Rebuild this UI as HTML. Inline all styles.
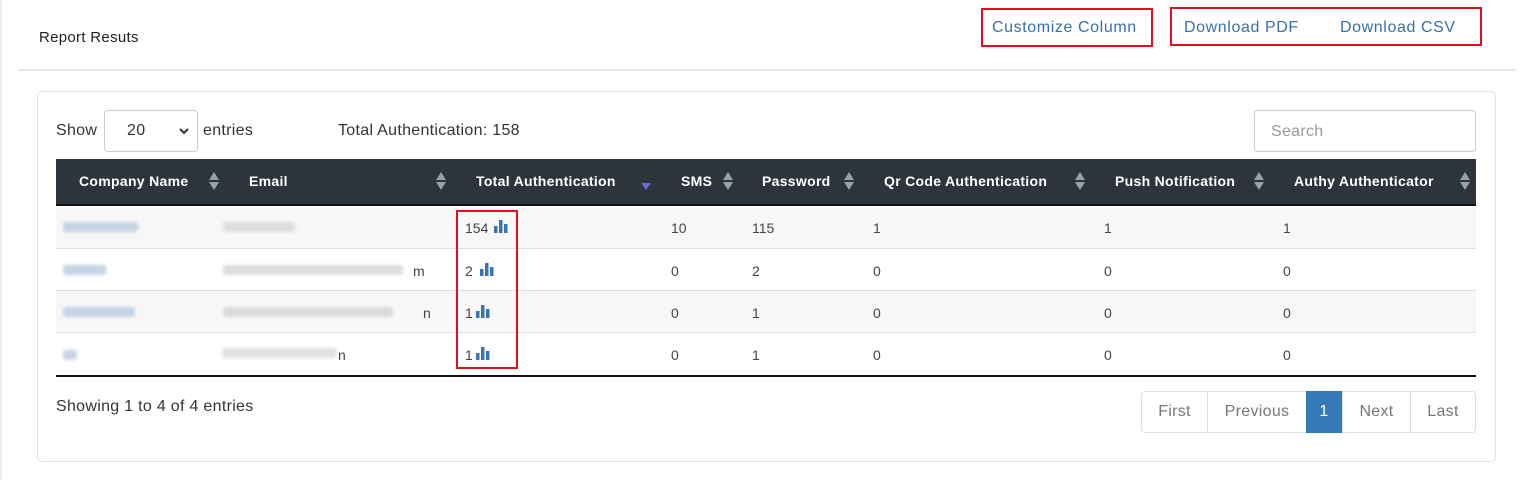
<!DOCTYPE html>
<html><head><meta charset="utf-8"><style>
*{margin:0;padding:0;box-sizing:border-box}
body{width:1536px;height:480px;background:#fff;font-family:"Liberation Sans",sans-serif;position:relative;overflow:hidden;color:#333}
.a{position:absolute;white-space:nowrap}
.lnk{color:#3a6fa8;font-size:16px;letter-spacing:0.6px}
.th{color:#fff;font-weight:bold;font-size:14px;top:173px;letter-spacing:0.3px}
.td{font-size:14px;color:#444}
.sort{position:absolute;width:10px;height:20px}
.blur{position:absolute;height:10px;border-radius:3px;filter:blur(1.5px)}
.pg{position:absolute;top:391px;height:42px;border:1px solid #ddd;font-size:16px;color:#777;display:flex;align-items:center;justify-content:center;letter-spacing:0.3px}
.t16{font-size:16px;letter-spacing:0.3px}
</style></head><body>
<div class="a" style="left:0;top:0;width:2px;height:480px;background:#eee"></div>
<div class="a" style="left:39px;top:29px;font-size:15px;color:#222;letter-spacing:0.3px">Report Resuts</div>
<div class="a" style="left:981px;top:8px;width:172px;height:39px;border:2px solid #e0101e"></div>
<div class="a lnk" style="left:992px;top:19px">Customize Column</div>
<div class="a" style="left:1170px;top:7px;width:312px;height:39px;border:2px solid #e0101e"></div>
<div class="a lnk" style="left:1184px;top:19px">Download PDF</div>
<div class="a lnk" style="left:1340px;top:19px">Download CSV</div>
<div class="a" style="left:18px;top:69px;width:1498px;height:2px;background:#e6e6e6"></div>

<div class="a" style="left:37px;top:91px;width:1459px;height:371px;border:1px solid #e2e2e2;border-radius:5px"></div>
<div class="a t16" style="left:56px;top:122px;color:#333">Show</div>
<div class="a" style="left:104px;top:110px;width:94px;height:42px;border:1px solid #ccc;border-radius:4px"></div>
<div class="a t16" style="left:127px;top:122px">20</div>
<svg class="a" style="left:178px;top:127px" width="12" height="8"><path d="M2 2l4 4 4-4" fill="none" stroke="#333" stroke-width="2"/></svg>
<div class="a t16" style="left:203px;top:122px">entries</div>
<div class="a t16" style="left:338px;top:122px">Total Authentication: 158</div>
<div class="a" style="left:1254px;top:110px;width:222px;height:42px;border:1px solid #ccc;border-radius:4px"></div>
<div class="a t16" style="left:1271px;top:123px;color:#999">Search</div>

<div class="a" style="left:56px;top:159px;width:1420px;height:47px;background:#2e343c;border-bottom:2px solid #111"></div>
<div class="a th" style="left:79px">Company Name</div>
<div class="a th" style="left:249px">Email</div>
<div class="a th" style="left:476px">Total Authentication</div>
<div class="a th" style="left:681px">SMS</div>
<div class="a th" style="left:762px">Password</div>
<div class="a th" style="left:884px">Qr Code Authentication</div>
<div class="a th" style="left:1115px">Push Notification</div>
<div class="a th" style="left:1294px">Authy Authenticator</div>
<svg class="sort" style="left:209px;top:171px"><path d="M5 1l5 8H0zM5 19l5-8H0z" fill="#9aa0a8"/></svg>
<svg class="sort" style="left:436px;top:171px"><path d="M5 1l5 8H0zM5 19l5-8H0z" fill="#9aa0a8"/></svg>
<svg class="sort" style="left:641px;top:171px"><path d="M5 19l5-7H0z" fill="#6a6ad8"/></svg>
<svg class="sort" style="left:723px;top:171px"><path d="M5 1l5 8H0zM5 19l5-8H0z" fill="#9aa0a8"/></svg>
<svg class="sort" style="left:844px;top:171px"><path d="M5 1l5 8H0zM5 19l5-8H0z" fill="#9aa0a8"/></svg>
<svg class="sort" style="left:1075px;top:171px"><path d="M5 1l5 8H0zM5 19l5-8H0z" fill="#9aa0a8"/></svg>
<svg class="sort" style="left:1254px;top:171px"><path d="M5 1l5 8H0zM5 19l5-8H0z" fill="#9aa0a8"/></svg>
<svg class="sort" style="left:1460px;top:171px"><path d="M5 1l5 8H0zM5 19l5-8H0z" fill="#9aa0a8"/></svg>

<div class="a" style="left:56px;top:207px;width:1420px;height:42px;background:#f7f7f7;border-bottom:1px solid #ddd"></div>
<div class="a" style="left:56px;top:249px;width:1420px;height:42px;border-bottom:1px solid #ddd"></div>
<div class="a" style="left:56px;top:291px;width:1420px;height:42px;background:#f7f7f7;border-bottom:1px solid #ddd"></div>
<div class="a" style="left:56px;top:375px;width:1420px;height:2px;background:#111"></div>

<div class="blur" style="left:63px;top:222px;width:75px;background:#c5d3e5"></div>
<div class="blur" style="left:223px;top:222px;width:72px;background:#ddd"></div>
<div class="blur" style="left:63px;top:265px;width:43px;background:#c5d3e5"></div>
<div class="blur" style="left:223px;top:265px;width:180px;background:#ddd"></div>
<div class="a td" style="left:413px;top:263px">m</div>
<div class="blur" style="left:63px;top:307px;width:72px;background:#c5d3e5"></div>
<div class="blur" style="left:223px;top:307px;width:170px;background:#ddd"></div>
<div class="a td" style="left:423px;top:305px">n</div>
<div class="blur" style="left:63px;top:350px;width:14px;background:#c5d3e5"></div>
<div class="blur" style="left:222px;top:348px;width:115px;background:#e2e2e2"></div>
<div class="a td" style="left:338px;top:347px">n</div>

<div class="a" style="left:456px;top:210px;width:62px;height:159px;border:2px solid #e0101e"></div>
<div class="a td" style="left:465px;top:220px">154</div>
<div class="a td" style="left:465px;top:263px">2</div>
<div class="a td" style="left:465px;top:305px">1</div>
<div class="a td" style="left:465px;top:347px">1</div>
<svg class="a" style="left:493px;top:219px" width="16" height="14"><path d="M1 7h3.5v7H1zM6 1h3.5v13H6zM11 5h3.5v9H11z" fill="#3a73b0"/></svg>
<svg class="a" style="left:479px;top:262px" width="16" height="14"><path d="M1 7h3.5v7H1zM6 1h3.5v13H6zM11 5h3.5v9H11z" fill="#3a73b0"/></svg>
<svg class="a" style="left:475px;top:304px" width="16" height="14"><path d="M1 7h3.5v7H1zM6 1h3.5v13H6zM11 5h3.5v9H11z" fill="#3a73b0"/></svg>
<svg class="a" style="left:475px;top:346px" width="16" height="14"><path d="M1 7h3.5v7H1zM6 1h3.5v13H6zM11 5h3.5v9H11z" fill="#3a73b0"/></svg>

<div class="a td" style="left:671px;top:220px">10</div><div class="a td" style="left:752px;top:220px">115</div><div class="a td" style="left:873px;top:220px">1</div><div class="a td" style="left:1104px;top:220px">1</div><div class="a td" style="left:1283px;top:220px">1</div>
<div class="a td" style="left:671px;top:263px">0</div><div class="a td" style="left:752px;top:263px">2</div><div class="a td" style="left:873px;top:263px">0</div><div class="a td" style="left:1104px;top:263px">0</div><div class="a td" style="left:1283px;top:263px">0</div>
<div class="a td" style="left:671px;top:305px">0</div><div class="a td" style="left:752px;top:305px">1</div><div class="a td" style="left:873px;top:305px">0</div><div class="a td" style="left:1104px;top:305px">0</div><div class="a td" style="left:1283px;top:305px">0</div>
<div class="a td" style="left:671px;top:347px">0</div><div class="a td" style="left:752px;top:347px">1</div><div class="a td" style="left:873px;top:347px">0</div><div class="a td" style="left:1104px;top:347px">0</div><div class="a td" style="left:1283px;top:347px">0</div>

<div class="a t16" style="left:56px;top:398px">Showing 1 to 4 of 4 entries</div>
<div class="pg" style="left:1141px;width:67px;border-radius:4px 0 0 4px">First</div>
<div class="pg" style="left:1207px;width:100px">Previous</div>
<div class="pg" style="left:1306px;width:36px;background:#337ab7;border-color:#337ab7;color:#fff">1</div>
<div class="pg" style="left:1342px;width:69px">Next</div>
<div class="pg" style="left:1410px;width:66px;border-radius:0 4px 4px 0">Last</div>
</body></html>
